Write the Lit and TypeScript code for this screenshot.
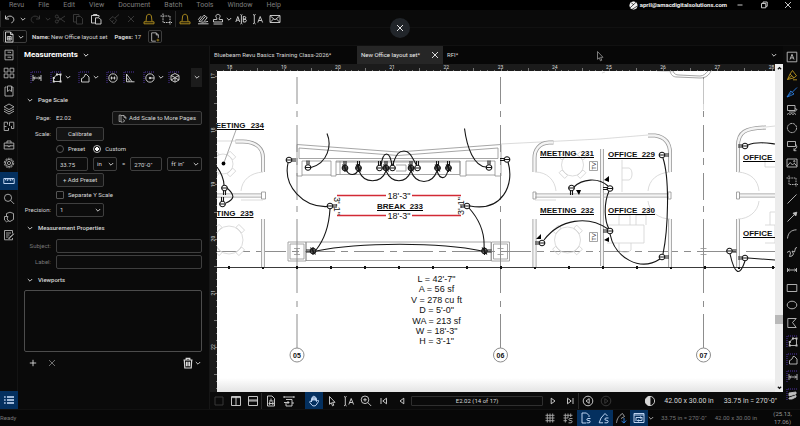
import { LitElement, html, svg, css, type SVGTemplateResult } from "lit";
import { customElement, property } from "lit/decorators.js";
import { classMap } from "lit/directives/class-map.js";

const corner = svg`<path class="pu" d="M1 12V1H11" stroke-dasharray="1 1"/>`;

/* Glyphs drawn on a 12 x 12 grid. Classes: f = filled, pu/ye/bl = accent colours. */
const ICONS: Record<string, SVGTemplateResult> = {
  undo: svg`<path d="M1.5 2.5V6H5M1.7 5.8C3 3.3 5.5 2.6 7.6 3.4C10.6 4.7 10.6 8.6 7.4 9.8"/>`,
  redo: svg`<path d="M10.5 2.5V6H7M10.3 5.8C9 3.3 6.5 2.6 4.4 3.4C1.4 4.7 1.4 8.6 4.6 9.8"/>`,
  chev: svg`<path d="M3.8 5L6 7.2L8.2 5"/>`,
  cut: svg`<circle cx="2.8" cy="3.5" r="1.5"/><circle cx="2.8" cy="8.5" r="1.5"/><path d="M4 4.3L11 9M4 7.7L11 3"/>`,
  copy: svg`<path d="M4 9H1.5V1.5H7V3M4.5 3.5H8.5L10.5 5.5V11H4.5Z"/>`,
  paste: svg`<path d="M5 10H1.5V2.5H9V4M3.5 2.5V1.5H7V2.5M5.5 4.8H9L11 6.8V11H5.5Z"/>`,
  brush: svg`<path d="M11 1.5L7 5M5 3.5L8.6 7.2L6 11L1.5 6.3ZM4 9L5.5 7.2"/>`,
  x: svg`<path d="M3 3L9 9M9 3L3 9"/>`,
  bell: svg`<path class="ye" d="M3 8.5L3.5 4C3.6 2 4.8 1.3 6 1.3S8.4 2 8.5 4L9 8.5M1 10.8H11V8.8H1Z"/>`,
  crop: svg`<path d="M3 .5V9.5H12M.5 3H10V11.5" stroke-dasharray="1.6 .8"/>`,
  eraser: svg`<path d="M1 10.8H11.5M2 8.5L7 2.2L10.2 4.6L6.5 9.3ZM4.5 8L8 3.8M1.2 6.8L4 3.2M7.5 9.2L11 8.4"/>`,
  stamp: svg`<path d="M4.8 6.5V5C3 3.5 4 1.4 6 1.4S9 3.5 7.2 5V6.5H10.5V9H1.5V6.5ZM1.5 11H10.5"/>`,
  ab: svg`<path d="M.8 9L2.8 3.5L4.8 9M1.6 7.2H4M5.4 1.5L6.4 2.2L7.4 1.5M6.4 2.2V10.3M5.4 11L6.4 10.3L7.4 11M8.3 3.5V9H10C11.8 9 11.8 6.3 10 6.2H8.3H9.7C11.2 6 11.2 3.5 9.7 3.5Z"/>`,
  ia: svg`<path d="M1 1.5L2.3 2.2L3.6 1.5M2.3 2.2V10M1 11L2.3 10L3.6 11M5.8 9.5L8.2 3.5L10.6 9.5M6.7 7.5H9.7"/>`,
  mail: svg`<path d="M1 2.5H11V9.5H1ZM1.3 3L6 6.8L10.7 3M1.5 9L4.5 6M10.5 9L7.5 6"/>`,
  doc: svg`<path d="M2.5 1H7.5L10 3.5V11H2.5ZM7.5 1V3.5H10M4.3 5.5H8.2V9H4.3ZM4.3 7.2H8.2M6.2 5.5V9"/>`,
  newdoc: svg`<path d="M7 11H2V1H7.5L10 3.5V7M7.5 1V3.5H10"/><path class="ye" d="M9.5 8V11.4M7.8 9.7H11.2"/>`,
  logo: svg`<circle class="f" cx="6" cy="6" r="5"/><path stroke="#000" d="M1 9.5L10 1M3.5 11.5L11.5 6.5M3 2.5L6.5 5"/>`,
  min: svg`<path d="M3.5 6H8.5"/>`,
  restore: svg`<path d="M3.5 4.5H7.8V8.8H3.5ZM5 4.3V3H9.2V7.3H8"/>`,
  cabinet: svg`<path d="M2 1.2H10V10.8H2ZM2 6H10M4.5 3.2H7.5V4M4.5 8.2H7.5V9"/>`,
  tiles: svg`<path d="M1.2 1.2H5V5H1.2ZM7 1.2H10.8V5H7ZM1.2 7H5V10.8H1.2ZM7 7H10.8V10.8H7Z"/>`,
  bookmark: svg`<path d="M3.5 2H2V11H10V2H8.5M4.5 1H8.5V6.5L6.5 5L4.5 6.5Z"/>`,
  layers: svg`<path d="M6 1L11 3.8L6 6.6L1 3.8ZM1 6L6 8.8L11 6M1 8.2L6 11L11 8.2"/>`,
  spaces: svg`<path d="M4.5 1.2H1.2V9.5H5.5V7M1.2 5.5H3.5M4.5 1.2V3.5M6.5 1.2H10.8V7.5H8.5M6.5 1.2V5M8.5 5V7.5"/>`,
  toolbox: svg`<path d="M1.2 4H10.8V10H1.2ZM4 4V2H8V4M1.2 6.8H4.8M7.2 6.8H10.8M5 6V7.6H7V6"/>`,
  gear: svg`<circle cx="6" cy="6" r="4.7" stroke-dasharray="2 .9"/><circle cx="6" cy="6" r="3.6"/><circle cx="6" cy="6" r="1.6"/>`,
  ruler: svg`<path d="M.8 3.5H11.2V8.5H.8ZM2.6 3.5V5.3M4.3 3.5V6M6 3.5V5.3M7.7 3.5V6M9.4 3.5V5.3"/>`,
  search: svg`<circle cx="5" cy="4.8" r="3.6"/><path d="M7.6 7.4L11.2 11"/>`,
  cube: svg`<path d="M3.5 2.5L7 1.2L10.5 2.5V8.5L7 10.5L5 9.8M3.5 2.5V5M1.5 5.5H5L4 8L5.5 9.5L3.5 10.8L1.5 9Z"/>`,
  form: svg`<path d="M9.5 4.5V1.5H1.5V10.8H9.5V9M3 4H8M3 6H6.5M3 8H5.5M10.8 4.8L6.5 9.3L5.8 10L6.2 8.6Z"/>`,
  list: svg`<path d="M4 3H11M4 6H11M4 9H11M1.2 3H2.6M1.2 6H2.6M1.2 9H2.6" stroke-width="1.4"/>`,
  mlen: svg`${corner}<path d="M3 4V10M11 4V10M3.5 7H10.5M5 5.6L3.6 7L5 8.4M9 5.6L10.4 7L9 8.4"/>`,
  mpoly: svg`${corner}<path d="M3.5 10.5V7L7 3.5H10.5V10.5Z"/><path class="f" d="M2.8 9.5h2v2h-2zM9.5 9.5h2v2h-2zM9.5 2.5h2v2h-2zM2.8 6h2v2h-2zM6 2.5h2v2h-2z" stroke="none"/>`,
  marea: svg`${corner}<path d="M3.5 11V7.5C5.5 7 6.8 5.5 7 3.5H8.5L11 6V11Z"/>`,
  mcount: svg`${corner}<circle cx="7" cy="7" r="4.2"/><path d="M5.5 5.5V8.5M8.5 5.5V8.5M4.5 7H9.5"/>`,
  mangle: svg`${corner}<path d="M3.5 3V10.8H11.5M3.5 3L9 10.8M3.5 7.8C5.2 7.6 6.2 9 6.2 10.8"/>`,
  mrad: svg`${corner}<circle cx="7" cy="7" r="4.2"/><path d="M7 7H11"/><circle class="f" cx="7" cy="7" r=".8"/>`,
  mvol: svg`${corner}<path d="M7 2.5L11 4.5V9L7 11.2L3 9V4.5ZM3 4.5L7 6.5L11 4.5M7 6.5V11M3 9L7 6.8L11 9"/>`,
  hatch: svg`${corner}<path class="f" d="M3 5L10 4V6L3 8ZM3 10L10 7.5V9L6 11H3Z"/>`,
  pages: svg`<path d="M3.5 10H1.5V1.5H4M4 2H8L10.5 4.5V7M4 2V10.8H6M8 2V4.5H10.5M6.5 7L9 9.2L6.5 11"/>`,
  trash: svg`<path d="M1.5 3H10.5M4.2 3V1.3H7.8V3M2.3 3L2.8 11H9.2L9.7 3M4.5 4.8V9.3M6 4.8V9.3M7.5 4.8V9.3" stroke-width="1.2"/>`,
  plus: svg`<path d="M6 2.8V9.2M2.8 6H9.2"/>`,
  abox: svg`<path d="M1.2 1.2H10.8V10.8H1.2ZM4 8.5L6 3.3L8 8.5M4.7 6.9H7.3"/>`,
  hilite: svg`<path class="ye" d="M6.5 1.5L4 5L1.5 10.5L8 8.8L10.5 6.8ZM4 5L8 8.800M1.500 10.500L6 6.500M7 10.800H11"/>`,
  pen: svg`<path class="bl" d="M11 1.5L6.5 6M4.8 5L8 8L4.5 9.6L1 11L3 8ZM1 11L5.5 7"/>`,
  textu: svg`<path d="M1.5 1.5H9V6.5H1.5V1.5M9 4.5L11 5.5L8.5 8H3M1 10.5L2.5 9.5L4 10.5L5.5 9.5L7 10.5L8.5 9.5L10 10.5"/>`,
  cloud: svg`<circle cx="6" cy="6" r="4.6" stroke-dasharray="2.6 .5"/>`,
  callout: svg`<path d="M1.5 1.5H9.5V6.5H1.5ZM9.5 4L11 7L8 10.5M8 8.3V10.7H10.4"/>`,
  image: svg`<path d="M1 2H11V10H1ZM1.2 9L4.2 5.5L6.5 8L8.3 6.2L10.8 9"/><circle cx="8.3" cy="4.2" r=".7"/>`,
  line: svg`<path d="M1.5 10.5L10.5 1.5"/>`,
  arrow: svg`<path d="M1.5 10.5L8 4"/><path class="f" d="M10.8 1.2L9.8 5L7 2.2Z"/>`,
  arc: svg`<path d="M1.5 10.5C2 5 5 2 10.5 1.8"/>`,
  squig: svg`<path d="M1 6.5L3.500 5L4.500 7L3.500 10.500L6 10L7.500 8L6 5L8.500 6L9.5 2L11 1.5"/>`,
  dim: svg`<path d="M1.5 4V8M10.5 4V8M2 6H10M3.5 4.8L2.2 6L3.5 7.2M8.5 4.8L9.8 6L8.5 7.2"/>`,
  rect: svg`<path d="M1.2 2.5H10.8V9.5H1.2Z"/>`,
  ellipse: svg`<ellipse cx="6" cy="6" rx="4.8" ry="3.8"/>`,
  polygon: svg`<path d="M1.8 1.5H10.2L6.5 5.5L10.2 10.5H1.8Z"/>`,
  box: svg`<path d="M2 2H10V10H2Z"/>`,
  cols: svg`<path d="M1.5 1.5H10.5V10.5H1.5ZM6 1.5V10.5M1.5 2.6H10.5"/>`,
  rows: svg`<path d="M1.5 1.5H10.5V10.5H1.5ZM1.5 6H10.5M1.5 5H10.5"/>`,
  fitpage: svg`<path d="M2.5 1H7L9.5 3.5V11H2.5ZM4 6H8.5M4 8.5H8.5M6 3.5V6M5 7L4 8.5L5 10M7.5 7L8.5 8.5L7.5 10"/>`,
  fitw: svg`<path d="M1 1V3M11 1V3M1 2H11M3 4.5H9V11H3V8M1 7.5H6M4.5 6L6 7.5L4.5 9M9 8H11"/>`,
  hand: svg`<path d="M3.5 7V3.4C3.5 2.4 4.7 2.4 4.7 3.4V5.5V2C4.7 1 6 1 6 2V5.3V2.2C6 1.2 7.3 1.2 7.3 2.2V5.5V3.4C7.3 2.5 8.5 2.5 8.5 3.4V6.5L9.6 5.5C10.4 5 11 5.8 10.5 6.5L8 10.2C7.3 11.2 4.7 11.2 4 10.2L1.8 7.5C1.2 6.6 2.3 5.8 3 6.5Z"/>`,
  cursor: svg`<path d="M3.5 1.5V9.3L5.3 7.7L6.5 10.8L7.8 10.2L6.6 7.3H9Z"/>`,
  zoom: svg`<circle cx="5" cy="4.8" r="3.8"/><path d="M7.8 7.6L11.2 11M5 3V6.6M3.2 4.8H6.8"/>`,
  first: svg`<path d="M3 3V9M8.5 3.2V8.8L4.8 6Z"/>`,
  prev: svg`<path d="M7.8 3.2V8.8L4 6Z"/>`,
  next: svg`<path d="M4.2 3.2V8.8L8 6Z"/>`,
  last: svg`<path d="M9 3V9M3.5 3.2V8.8L7.2 6Z"/>`,
  back: svg`<circle cx="6" cy="6" r="4.8"/><path d="M7.2 3.6V8.4L4 6Z"/>`,
  fwd: svg`<circle cx="6" cy="6" r="4.8"/><path d="M4.8 3.6V8.4L8 6Z"/>`,
  contrast: svg`<circle cx="6" cy="6" r="4.6"/><path class="f" d="M6 1.4A4.6 4.6 0 0 0 6 10.6Z"/>`,
  grid: svg`<path d="M3.3 1.5V10.5M6 1.5V10.5M8.7 1.5V10.5M1.5 3.3H10.5M1.5 6H10.5M1.5 8.7H10.5"/>`,
  snapgrid: svg`<path d="M3.3 1.5V10.5M6 1.5V6M8.7 1.5V5M1.5 3.3H10.5M1.5 6H6M1.5 8.7H5M10.5 6.5H8C6.5 6.5 6.5 8.5 8 8.5H9C10.5 8.5 10.5 10.8 9 10.8H6.5"/>`,
  snapdoc: svg`<path d="M6 11H2V1H6.5L9 3.5V5M10.5 6.5H8C6.5 6.5 6.5 8.5 8 8.5H9C10.5 8.5 10.5 10.8 9 10.8H6.5"/>`,
  snapmark: svg`<path d="M1.2 10.8L3 6L7 1.5L9.5 4M1.2 10.8H5M10.5 6H8C6.5 6 6.5 8.3 8 8.3H9C10.5 8.3 10.5 10.8 9 10.8H6.5"/>`,
  reuse: svg`<path d="M1.5 10.8C2 7 3.5 4 7.5 1.5L9.5 4.5L6 6.5"/><path class="bl" d="M9 6V11M6.5 9L9 11L11.2 8.5"/>`,
  sync: svg`<path d="M1 1.5H11V10.5H1ZM1 3H11M3 5.5V9M3 5.500H8.500M9 8.500V5M9 8.500H4.500M7.500 4.500L8.500 5.500L7.500 6.500M5.500 7.500L4.500 8.500L5.500 9.500"/>`,
};

const glyph = (name: string) => html`<svg class="ico" viewBox="0 0 12 12" aria-hidden="true">${ICONS[name]}</svg>`;

const shared = css`
  * { box-sizing: border-box; }
  .ico { width: 12px; height: 12px; flex: none; display: block; fill: none; stroke: currentColor; stroke-width: 0.9; }
  .ico .f { fill: currentColor; }
  .ico .pu { stroke: #5a3bb5; }
  .ico .ye { stroke: #b8941f; }
  .ico .bl { stroke: #2b7fe0; }
  button, input, select, textarea { font: inherit; color: inherit; margin: 0; padding: 0; background: none; border: 0; border-radius: 0; appearance: none; outline: none; }
  button { display: flex; align-items: center; justify-content: center; white-space: nowrap; }
  .dim { color: #3c3c3c; }
`;

/* ---------- plan drawing ---------- */
type Dir = "l" | "r" | "u" | "d";
const LEADS: Record<Dir, string> = {
  l: "M-3 -1H-7M-3 1H-7",
  r: "M3 -1H7M3 1H7",
  u: "M-1 -3V-7M1 -3V-7",
  d: "M-1 3V7M1 3V7",
};
const outlet = (x: number, y: number, d: Dir, dark = false) => svg`
  <g class="wire" transform="translate(${x} ${y})"><circle r="2.8" class=${dark ? "dark" : "open"}/><path d="M-3 0H3${LEADS[d]}"/>
  ${dark ? svg`<path d="M-2.500 -3.500L2.500 3.500M0 -4V4"/>` : ""}</g>`;
const wall = (d: string) => svg`<path class="wo" d=${d}/><path class="wi" d=${d}/>`;
const gridLine = (x: number, n: string) => svg`
  <path class="axis" d="M${x} 77v27m0 7v6m0 8v27m0 6v7m0 8v27m0 6v6m0 7v74m0 8v6m0 7v34"/>
  <circle class="axis" cx=${x} cy="355" r="7"/><text class="tag" x=${x} y="358">${n}</text>`;
const room = (x1: number, x2: number, y: number, name: string, no = "") => svg`
  <text class="room" x=${x1} y=${y}>${name}</text>${no ? svg`<text class="room end" x=${x2} y=${y}>${no}</text>` : ""}
  <path class="under" d="M${x1} ${y + 2}H${x2}"/>`;
const table = (x: number, y: number, r: number) => svg`
  <g class="faint" transform="translate(${x} ${y})"><circle r=${r}/>
  ${[45, 135, 225, 315].map((a) => svg`<path transform="rotate(${a})" d="M${r} -4h4v8h-4z"/>`)}</g>`;
const column = (x: number) => svg`
  <path class="mid" d="M${x - 9} 242h18v19h-18zM${x - 7} 244h14v15h-14z"/><path class="mid" d="M${x - 3} 248.500h6m-3 0v6m-3 0h6"/>`;
const tv = (y: number) => svg`<path class="mid" d="M589.500 ${y - 4.5}h8v9h-8z"/><text class="tv" transform="translate(596 ${y}) rotate(-90)">TV</text>`;

@customElement("plan-canvas")
class PlanCanvas extends LitElement {
  static styles = css`
    :host { display: block; min-width: 0; min-height: 0; background: linear-gradient(#fff calc(100% - 14px), #e4e4e4); overflow: hidden; }
    svg { display: block; width: 100%; height: 100%; fill: none; }
    .axis { stroke: #8d8d8d; }
    .mid { stroke: #8f8f8f; stroke-width: 0.8; }
    .faint { stroke: #d2d2d2; stroke-width: 0.8; }
    .wo { stroke: #9a9a9a; stroke-width: 4; }
    .wi { stroke: #f4f4f4; stroke-width: 2.4; }
    .base { stroke: #3a3a3a; stroke-width: 1.2; }
    .nodes { stroke: #111; stroke-width: 3; stroke-dasharray: 2 32; }
    .wire { stroke: #161616; stroke-width: 1.1; }
    .open { fill: #fff; }
    .dark { fill: #777; }
    .solid { fill: #000; }
    .red { stroke: #d22a35; stroke-width: 1.4; }
    .under { stroke: #000; stroke-width: 1; }
    text { fill: #111; stroke: none; font-family: "Liberation Sans", Arial, sans-serif; }
    .room { font-size: 8px; font-weight: 700; }
    .end { text-anchor: end; }
    .tag { font-size: 7px; font-weight: 700; text-anchor: middle; }
    .note { font-size: 9px; text-anchor: middle; }
    .tv { font-size: 6px; text-anchor: middle; }
  `;
  render() {
    const notes = ["L = 42'-7\"", "A = 56 sf", "V = 278 cu ft", "D = 5'-0\"", "WA = 213 sf", "W = 18'-3\"", "H = 3'-1\""];
    return html`<svg role="img" aria-label="Floor plan E2.02"><g transform="translate(-217 -71)">
      <path class="axis" stroke-dasharray="30 6 7 6" d="M207 251.500H1200"/>
      ${[297, 500.5, 703.5].map((x, i) => gridLine(x, ["05", "06", "07"][i]))}
      <path class="mid" d="M700.500 248.500h6m-3 0v6m-3 0h6"/>
      <path class="base" d="M217 267.500H775"/><path class="nodes" d="M228 267.500H775"/>
      <path class="faint" d="M501 144L600 139L648 135M217 141H236M766 127L775 126M657 71L674 72M602 73L605 72M703.500 79V110"/>
      <path class="mid" d="M670 71C671 75 673 77 677 77L700 78C706 78 709 75 711 71M673 71C674 74 676 75 679 75L700 76C704 76 706 73 708 71"/>
      ${wall("M235.500 141.500H243C257 142 263 149 263 158V172")}
      ${wall("M553.500 142.500H549C539 143 534.500 150 534.500 158V172")}
      ${wall("M648 135.500H655C665 137 670 143 670 153V172")}
      ${wall("M766 127.500C745 128 738 132 738 146V172")}
      ${wall("M217 195.500H262M535 195.500H600M603 195.500H669M739 195.500H775")}
      ${wall("M263 219V267M534.500 219V267M602 149V266M670 219V267M738 219V267")}
      <path class="mid" d="M261.500 192h4v7h-4zM533 192h3v7h-3zM668 192h3v7h-3zM736.500 192h3v7h-3z"/>
      <path class="faint" d="M263 172C250 173 242 180 241 191M241 200H263M535 172C547 172 555 180 556 191M535 200H556M670 172C657 173 649 180 648 191M648 201C649 212 660 219 670 219M738 172C751 173 758 180 759 191M759 201C758 212 748 219 738 219"/>
      ${table(223, 164, 10)}${table(229, 240, 14)}${table(572.5, 165, 11)}${table(567.5, 240, 13)}
      <path class="faint" d="M622 160V192M622 168H629C633 169 633 179 629 180H622M607 225H644V243H607M619 225V215H630V225M636 225V215H646V225M619 243V250C621 253 629 253 631 250V243M765 158V167H775M765 225H775V243H765M770 225V212H775"/>
      <path class="mid" d="M297 144.500L398 152L501 144.500V176H495V161H466V176H460V161H336V176H331V161H302V176H297ZM299 148L398 155.500L498 148V158.500H299ZM302 175H331M336 174.500H460M466 175H495M460 161V174M340 161V174"/>
      <path class="mid" stroke-width="1.500" d="M336 162H460"/>
      <path class="mid" d="M306 242H491M306 260.500H491M306 242V261M491 242V261"/>
      ${column(297)}${column(500.5)}
      <path class="mid" d="M236 130L223.500 164"/><circle class="solid" cx="223.500" cy="163.500" r="1.900"/>
      <path class="wire" d="M327 133.500C332 145 328 163 311 167.500M288 163C283 186 303 208 328 206.500M346 170C349 176 356 176 358 170M359 171C364 184 381 184 386 171C392 184 406 184 411 171C416 185 432 185 437 171C440 180 446 180 448 170M381 166C383 150 390 150 392 166M392 168C396 152 400 151 404 151C411 151 413 160 417 166M464.500 128.500C467 148 474 166 486 167M508 162C515 185 502 212 470 206M330 209C329 226 324 240 316 250M316 251C360 242 440 242 482 251M469 208C478 218 485 232 484 248"/>
      <path class="wire" d="M217 167C221 172 224 180 224 185M227 188C235 195 235 199 226 203M574 187C582 179 598 177 608 186M663 158C670 180 668 230 663 254M609 191C603 205 605 222 609 229M610 234C615 258 640 272 660 259M544 240C560 219 588 215 608 229M748 145C757 141 767 143 775 144M730 254C735 276 740 276 745 261M748 258L775 260"/>
      <path class="mid" d="M396 165h10v6h-10"/>
      ${outlet(289, 160, "r")}${outlet(308, 167.5, "u")}${outlet(345, 168, "u", true)}${outlet(358.5, 168, "u", true)}
      ${outlet(379.5, 168, "u")}${outlet(386, 168, "u", true)}${outlet(392.5, 168, "u")}${outlet(411, 168, "u", true)}
      ${outlet(417.5, 168, "u")}${outlet(437.5, 168, "u", true)}${outlet(448.5, 168, "u", true)}${outlet(489, 167.5, "u")}
      ${outlet(507, 159.5, "l")}${outlet(467, 206, "l")}${outlet(330, 206, "r")}${outlet(313, 251, "l", true)}${outlet(484.5, 251, "r", true)}
      ${outlet(224.5, 188, "d")}${outlet(222.5, 204, "u")}${outlet(571.5, 188, "d")}${outlet(610, 188.5, "l")}${outlet(662, 155, "r")}
      ${outlet(610, 231, "l")}${outlet(662, 257, "r")}${outlet(542, 243, "l")}${outlet(745, 146, "l")}${outlet(729.5, 251, "r")}${outlet(745, 258, "l")}
      <path class="solid" d="M576 190h5l-2 5zM604 180l5 -4v6zM536 239l5 -5v5zM604 240l5 -3v5z"/>
      <path class="red" d="M337 195.500H386M412 195.500H461M337 215.500H386M412 215.500H461"/>
      <text class="note" x="399" y="198.500">18'-3"</text><text class="note" x="399" y="219">18'-3"</text>
      <text class="note" transform="translate(333.500 206) rotate(90)">3'-1"</text>
      <text class="note" transform="translate(464 206) rotate(-90)">3'-1"</text>
      ${room(209, 264, 127.5, "MEETING", "234")}${room(199, 253.5, 215.5, "MEETING", "235")}
      ${room(377, 423, 208.5, "BREAK", "233")}
      ${room(540, 594, 155.5, "MEETING", "231")}${room(540, 594, 212.5, "MEETING", "232")}
      ${room(608, 655, 156.5, "OFFICE", "229")}${room(608, 655, 212.5, "OFFICE", "230")}
      ${room(743, 775, 159.5, "OFFICE")}${room(743, 775, 235.5, "OFFICE")}
      ${tv(166)}${tv(237)}
      ${notes.map((t, i) => svg`<text class="note" x="436.500" y=${282 + Math.round(i * 10.4)}>${t}</text>`)}
    </g></svg>`;
  }
}

@customElement("plan-ruler")
class PlanRuler extends LitElement {
  @property({ type: Boolean, reflect: true }) vertical = false;
  static styles = css`
    :host { display: block; background: #1b1b1b; overflow: hidden; min-width: 0; min-height: 0; }
    svg { display: block; width: 100%; height: 100%; stroke: #777; }
    text { font: 5px Roboto, sans-serif; fill: #ddd; stroke: none; text-anchor: middle; }
  `;
  render() {
    const v = this.vertical;
    const start = v ? 5 : 19.5;
    const first = v ? 17 : 18;
    const count = v ? 6 : 11;
    const pitch = 54.2;
    const ticks: SVGTemplateResult[] = [];
    for (let i = -3; i < count * 8; i++) {
      const p = Math.round(start + (i * pitch) / 8) + 0.5;
      const len = i % 8 === 0 ? 2 : i % 4 === 0 ? 3 : 1;
      ticks.push(v ? svg`<path d="M7 ${p}H${7 - len}"/>` : svg`<path d="M${p} 7V${7 - len}"/>`);
    }
    const nums = Array.from({ length: count }, (_, i) => {
      const p = start + i * pitch;
      return v
        ? svg`<text transform="translate(5 ${p}) rotate(-90)">${first + i}</text>`
        : svg`<text x=${p} y="5">${first + i}</text>`;
    });
    return html`<svg aria-hidden="true">${ticks}${nums}</svg>`;
  }
}

/* ---------- measurements panel ---------- */
@customElement("measure-panel")
class MeasurePanel extends LitElement {
  static styles = [shared, css`
    :host { display: flex; flex-direction: column; padding: 0 7px 0 6px; color: #d8d8d8; }
    h2, h3 { margin: 0; font-weight: 500; font-size: 6px; display: flex; align-items: center; gap: 2px; height: 20px; }
    h2 { font-size: 8px; font-weight: 700; color: #fff; height: 18px; gap: 2px; }
    .tools { display: flex; align-items: center; height: 26px; padding-left: 3px; }
    .t { width: 17px; height: 18px; flex: none; }
    .c { width: 8px; height: 18px; flex: none; }
    .g { margin-right: 3px; }
    .more { width: 11px; height: 19px; background: #1c1c1c; margin-left: auto; }
    .row { display: flex; align-items: center; height: 16px; gap: 5px; }
    .row.s { height: 14px; }
    .lab { width: 27px; flex: none; text-align: right; }
    .off { color: #777; }
    .btn, .field { height: 14px; border: 1px solid #3f3f3f; border-radius: 2px; background: #0c0c0c; }
    .btn { background: #141414; width: 48px; }
    .btn.wide { width: 90px; gap: 2px; margin-left: auto; }
    .btn .ico { width: 9px; height: 9px; }
    .field { padding: 0 3px; width: 32px; }
    .field.full { flex: 1; min-width: 0; }
    .sel { position: relative; display: flex; }
    .sel select { padding-right: 12px; }
    .sel .ico { position: absolute; right: 0; top: 1px; pointer-events: none; }
    .w24 { width: 24px; } .w35 { width: 35px; } .w48 { width: 48px; }
    .opt { display: flex; align-items: center; gap: 4px; margin-right: 3px; }
    .opt input { width: 8px; height: 8px; border: 1px solid #555; border-radius: 50%; }
    .opt input[type="checkbox"] { border-radius: 1px; }
    .opt input:checked { background: radial-gradient(#fff 2px, #0a0a0a 2px); border-color: #bbb; }
    .list { height: 62px; border: 1px solid #4c4c4c; border-radius: 2px; }
    .acts { display: flex; align-items: center; height: 21px; padding: 0 0 0 3px; gap: 7px; }
    .push { margin-left: auto; display: flex; align-items: center; }
  `];
  render() {
    return html`
      <h2>Measurements ${glyph("chev")}</h2>
      <div class="tools">
        <button class="t g" aria-label="Length">${glyph("mlen")}</button>
        <button class="t" aria-label="Polylength">${glyph("mpoly")}</button><button class="c g" aria-label="More lengths">${glyph("chev")}</button>
        <button class="t" aria-label="Area">${glyph("marea")}</button><button class="c g" aria-label="More areas">${glyph("chev")}</button>
        <button class="t" aria-label="Diameter">${glyph("mcount")}</button>
        <button class="t g" aria-label="Angle">${glyph("mangle")}</button>
        <button class="t" aria-label="Radius">${glyph("mrad")}</button><button class="c" aria-label="More radii">${glyph("chev")}</button>
        <button class="t" aria-label="Volume">${glyph("mvol")}</button>
        <button class="more" aria-label="More tools">${glyph("chev")}</button>
      </div>
      <h3>${glyph("chev")}Page Scale</h3>
      <div class="row"><span class="lab">Page:</span><span>E2.02</span><button class="btn wide">${glyph("pages")}Add Scale to More Pages</button></div>
      <div class="row"><span class="lab">Scale:</span><button class="btn">Calibrate</button></div>
      <div class="row s"><span class="lab"></span>
        <label class="opt"><input type="radio" name="k" />Preset</label>
        <label class="opt"><input type="radio" name="k" checked />Custom</label></div>
      <div class="row"><span class="lab"></span>
        <input class="field" aria-label="Page distance" value="33.75" />
        <span class="sel"><select class="field w24" aria-label="Page unit"><option>in</option></select>${glyph("chev")}</span>
        <span>=</span>
        <input class="field" aria-label="Real distance" value="270'-0&quot;" />
        <span class="sel"><select class="field w35" aria-label="Real unit"><option>ft' in"</option></select>${glyph("chev")}</span></div>
      <div class="row"><span class="lab"></span><button class="btn">+ Add Preset</button></div>
      <div class="row s"><span class="lab"></span><label class="opt"><input type="checkbox" />Separate Y Scale</label></div>
      <div class="row"><label class="lab" for="prec">Precision:</label>
        <span class="sel"><select id="prec" class="field w48"><option>1</option></select>${glyph("chev")}</span></div>
      <h3>${glyph("chev")}Measurement Properties</h3>
      <div class="row"><label class="lab off" for="subj">Subject:</label><input id="subj" class="field full" /></div>
      <div class="row"><label class="lab off" for="labl">Label:</label><input id="labl" class="field full" /></div>
      <h3>${glyph("chev")}Viewports</h3>
      <div class="list"></div>
      <div class="acts">
        <button aria-label="Add">${glyph("plus")}</button><button class="off" aria-label="Remove">${glyph("x")}</button>
        <span class="push"><button aria-label="Delete">${glyph("trash")}</button><button class="c" aria-label="Delete options">${glyph("chev")}</button></span>
      </div>`;
  }
}

/* ---------- shell ---------- */
@customElement("app-root")
class AppRoot extends LitElement {
  static styles = [shared, css`
    :host { display: flex; flex-direction: column; height: 100vh; overflow: hidden; position: relative; background: #0a0a0a; color: #d8d8d8; font: 6px/8px Roboto, sans-serif; cursor: default; }
    .menu { display: flex; align-items: center; height: 10px; padding-left: 9px; gap: 14px; background: #000; color: #7d7d7d; font-size: 7px; flex: none; }
    .acct { margin-left: auto; display: flex; align-items: center; color: #f2f2f2; font-weight: 700; font-size: 6px; gap: 2px; }
    .acct .ico { width: 9px; height: 9px; }
    .win { display: flex; gap: 12px; padding: 0 6px 0 0; margin-left: -7px; color: #ddd; }
    .bar { display: flex; align-items: center; height: 18px; flex: none; border-bottom: 1px solid #111; }
    .b18 { width: 18px; } .b17 { width: 17px; } .b14 { width: 14px; } .b7 { width: 7px; }
    .bar button, .nav button, .status button { height: 17px; flex: none; }
    .sep { width: 1px; height: 16px; background: #2a2a2a; flex: none; }
    .docs { padding-left: 3px; gap: 7px; }
    .docs .drop { width: 24px; height: 13px; border: 1px solid #3d3d3d; border-radius: 2px; margin-right: -2px; }
    .docs .new { width: 14px; height: 13px; border: 1px solid #3d3d3d; border-radius: 2px; }
    .docs .new .ico { width: 10px; height: 10px; }
    .main { flex: 1; min-height: 0; display: flex; }
    .strip { width: 18px; flex: none; display: flex; flex-direction: column; border-right: 1px solid #141414; }
    .strip button { height: 18px; width: 18px; flex: none; color: #b0b0b0; }
    .strip .on, .nav .on, .status .on { background: #04305f; color: #cfe3ff; }
    .strip .end { margin-top: auto; }
    .strip.right { width: 17px; border: 0; padding: 2px 0 6px; }
    .strip.right button { flex: 1; min-height: 0; width: 17px; color: #c0c0c0; }
    measure-panel { width: 192px; flex: none; border-right: 1px solid #161616; }
    .center { flex: 1; min-width: 0; display: flex; }
    .side { flex: 1; min-width: 0; display: flex; flex-direction: column; }
    .tabs { display: flex; height: 18px; flex: none; background: #070707; }
    .tab { padding: 0 4px; justify-content: space-between; }
    .tab.one { width: 147px; }
    .tab.on { background: #262626; width: 86px; color: #eee; }
    .tabs .ico { margin-right: -2px; }
    .tabs .all { margin-left: auto; margin-right: 5px; }
    .view { flex: 1; min-height: 0; display: grid; grid-template-columns: 7px 1fr 8px; grid-template-rows: 7px 1fr; }
    .view .top { grid-column: 1 / 3; }
    .scroll { grid-column: 3; grid-row: 1 / 3; background: #ececec; color: #111; display: flex; flex-direction: column; align-items: center; }
    .scroll .ico { height: 9px; width: 9px; stroke-width: 1.6; }
    .scroll .flip { transform: rotate(180deg); }
    .thumb { height: 9px; width: 8px; background: #b9b9b9; }
    .above { flex: 244; } .below { flex: 59; }
    .nav { display: flex; align-items: center; height: 17px; flex: none; }
    .page { flex: 1; min-width: 0; height: 10px; border: 1px solid #2f2f2f; border-radius: 1px; text-align: center; margin: 0 1px; }
    .nav .info { display: flex; gap: 10px; font-size: 7px; white-space: pre; padding: 0 6px 0 5px; }
    .half { margin-left: 26px; }
    .status { display: flex; align-items: center; height: 17px; flex: none; background: #070707; border-top: 1px solid #111; color: #777; }
    .status .tools { margin-left: auto; display: flex; color: #aaa; }
    .status .info { display: flex; gap: 8px; padding: 0 14px 0 6px; white-space: pre; }
    .xy { width: 29px; padding-right: 6px; height: 16px; text-align: center; color: #999; }
    .close { position: absolute; left: 50%; top: 18px; width: 20px; height: 20px; margin-left: -10px; border-radius: 50%; background: #21252a; color: #fff; }
    .ptr { position: absolute; left: 75%; top: 50px; margin-left: -6px; color: #888; }
  `];

  private btn(name: string, cls: Record<string, boolean> = { b18: true }, label = name) {
    return html`<button class=${classMap(cls)} aria-label=${label}>${glyph(name)}</button>`;
  }

  render() {
    const w18 = { b18: true }, w17 = { b17: true }, w7 = { b7: true };
    const left = ["cabinet", "tiles", "bookmark", "layers", "spaces", "toolbox", "gear", "ruler", "search", "cube", "form"];
    const right = ["abox", "hilite", "pen", "textu", "cloud", "callout", "image", "crop", "line", "arrow", "arc", "squig", "dim", "rect", "ellipse", "polygon", "mpoly", "marea", "mlen", "hatch"];
    return html`
      <header class="menu">
        ${["Revu", "File", "Edit", "View", "Document", "Batch", "Tools", "Window", "Help"].map((m) => html`<span>${m}</span>`)}
        <span class="acct">${glyph("logo")}april@amacdigitalsolutions.com</span>
        <span class="win">${glyph("min")}${glyph("restore")}${glyph("x")}</span>
      </header>
      <div class="bar">
        <span class="sep"></span>
        ${this.btn("undo", w18)}${this.btn("chev", w7, "undo list")}
        ${this.btn("redo", { b18: true, dim: true })}${this.btn("chev", { b7: true, dim: true }, "redo list")}
        ${["cut", "copy"].map((n) => this.btn(n, { b18: true, dim: true }))}
        ${this.btn("paste", w18)}${this.btn("brush", { b17: true, dim: true })}${this.btn("x", { b18: true, dim: true })}
        ${this.btn("bell", w17)}${this.btn("crop", w18)}<span class="sep"></span>
        ${this.btn("bell", w18, "alerts")}${this.btn("eraser", w17)}${this.btn("stamp", { b14: true })}${this.btn("chev", w7, "stamps")}
        ${this.btn("ab", w17)}${this.btn("ia", w17)}${this.btn("mail", w18)}
      </div>
      <div class="bar docs">
        <button class="drop" aria-label="Document">${glyph("doc")}${glyph("chev")}</button>
        <span><b>Name:</b> New Office layout set</span><span><b>Pages:</b> 17</span>
        <button class="new" aria-label="New page">${glyph("newdoc")}</button>
      </div>
      <div class="main">
        <nav class="strip">
          ${left.map((n) => this.btn(n, { on: n === "ruler" }))}${this.btn("list", { on: true, end: true })}
        </nav>
        <measure-panel></measure-panel>
        <div class="center">
          <div class="side">
            <div class="tabs">
              <button class="tab one">Bluebeam Revu Basics Training Class-2026*</button>
              <button class="tab on">New Office layout set*${glyph("x")}</button>
              <button class="tab">RFI*</button>
              <button class="all" aria-label="All tabs">${glyph("chev")}</button>
            </div>
            <div class="view">
              <plan-ruler class="top"></plan-ruler>
              <plan-ruler vertical></plan-ruler>
              <plan-canvas></plan-canvas>
              <div class="scroll"><svg class="ico flip" viewBox="0 0 12 12">${ICONS.chev}</svg><span class="above"></span><span class="thumb"></span><span class="below"></span>${glyph("chev")}</div>
            </div>
            <div class="nav">
              ${this.btn("box", { b17: true, dim: true })}${this.btn("cols", w17)}${this.btn("rows", w17)}<span class="sep"></span>
              ${this.btn("fitpage", w18)}${this.btn("fitw", w18)}<span class="b7"></span>
              ${this.btn("hand", { b18: true, on: true })}${this.btn("cursor", w17)}${this.btn("ia", w17, "select text")}${this.btn("zoom", w18)}
              ${this.btn("first", w18)}${this.btn("prev", w17)}
              <input class="page" aria-label="Page" value="E2.02 (14 of 17)" />
              ${this.btn("next", w17)}${this.btn("last", w17)}<span class="sep"></span>
              ${this.btn("back", w18)}${this.btn("fwd", { b18: true, dim: true })}
              <button class="b18 half" aria-label="Dimmer">${glyph("contrast")}</button>
              <span class="info"><span>42.00 x 30.00 in</span><span>33.75 in = 270'-0"</span></span>
            </div>
          </div>
          <aside class="strip right">${right.map((n) => this.btn(n, {}))}</aside>
        </div>
      </div>
      <footer class="status">
        <span>Ready</span>
        <span class="tools">
          ${this.btn("grid", w18)}${this.btn("snapgrid", w18)}${this.btn("snapdoc", { b18: true, on: true })}${this.btn("snapmark", { b18: true, on: true })}
          ${this.btn("reuse", w17)}${this.btn("sync", { b18: true, on: true })}${this.btn("chev", w7, "more")}
        </span>
        <span class="info"><span>33.75 in = 270'-0"</span><span>42.00 x 30.00 in</span></span>
        <span class="xy">(25.13, 17.06)</span>
      </footer>
      <button class="close" aria-label="Close">${glyph("x")}</button>
      <svg class="ico ptr" viewBox="0 0 12 12" aria-hidden="true">${ICONS.cursor}</svg>`;
  }
}
